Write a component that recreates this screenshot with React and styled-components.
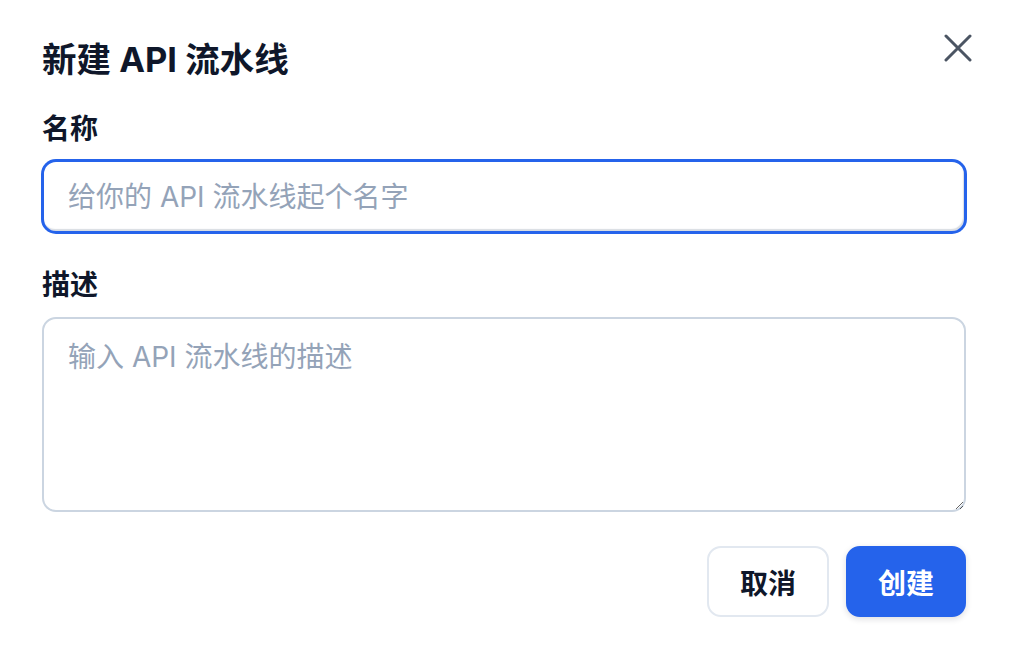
import React from 'react'
import styled, { createGlobalStyle } from 'styled-components'

const GlobalStyle = createGlobalStyle`
  * {
    box-sizing: border-box;
  }

  body {
    margin: 0;
    background: #ffffff;
    font-family: "Inter", "Noto Sans CJK SC", sans-serif;
    color: #0f172a;
  }
`

const Dialog = styled.div`
  width: 1012px;
  height: 658px;
  padding: 34px 46px 42px 42px;
  display: flex;
  flex-direction: column;
  background: #ffffff;
`

const Header = styled.div`
  display: flex;
  justify-content: space-between;
  align-items: flex-start;
`

const Title = styled.h2`
  margin: 4px 0 0 0;
  font-size: 34.5px;
  line-height: 44px;
  font-weight: 700;
  color: #0f172a;
`

const CloseButton = styled.button`
  border: 0;
  background: none;
  padding: 0;
  margin-right: -6px;
  width: 28px;
  height: 28px;
  color: #4b5563;
  cursor: pointer;
  display: flex;

  svg {
    display: block;
  }
`

const Field = styled.div`
  display: flex;
  flex-direction: column;
  margin-top: ${p => p.$top}px;
`

const Label = styled.label`
  font-size: 28px;
  line-height: 36px;
  font-weight: 600;
  color: #0f172a;
  margin-bottom: ${p => p.$gap}px;
`

const TextInput = styled.input`
  height: 73px;
  width: 100%;
  padding: 0 24px;
  border: 2px solid #2563eb;
  border-radius: 14px;
  box-shadow: 0 0 0 1px #2563eb, inset -1px -2px 1px rgba(100, 116, 139, 0.25);
  font-family: inherit;
  font-size: 28px;
  color: #0f172a;
  outline: none;

  &::placeholder {
    color: #94a3b8;
  }
`

const TextArea = styled.textarea`
  height: 195px;
  width: 100%;
  padding: 20px 24px;
  border: 2px solid #cbd5e1;
  border-radius: 14px;
  font-family: inherit;
  font-size: 28px;
  line-height: 36px;
  color: #0f172a;
  outline: none;
  resize: vertical;

  &::placeholder {
    color: #94a3b8;
  }
`

const Actions = styled.div`
  display: flex;
  justify-content: flex-end;
  gap: 17px;
  margin-top: 34px;
`

const Button = styled.button`
  height: 71px;
  padding: 0 ${p => (p.$primary ? 30 : 31)}px;
  border-radius: 14px;
  border: 2px solid ${p => (p.$primary ? '#2563eb' : '#e2e8f0')};
  background: ${p => (p.$primary ? '#2563eb' : '#ffffff')};
  color: ${p => (p.$primary ? '#ffffff' : '#0f172a')};
  box-shadow: ${p => (p.$primary ? '0 2px 6px rgba(15, 23, 42, 0.14)' : 'none')};
  font-family: inherit;
  font-size: 28px;
  font-weight: 700;
  cursor: pointer;
`

export default function App() {
  return (
    <>
      <GlobalStyle />
      <Dialog>
        <Header>
          <Title>新建 API 流水线</Title>
          <CloseButton aria-label="关闭">
            <svg width="28" height="28" viewBox="0 0 28 28" fill="none">
              <path d="M2 2L26 26M26 2L2 26" stroke="currentColor" strokeWidth="3" strokeLinecap="round" />
            </svg>
          </CloseButton>
        </Header>

        <Field $top={29}>
          <Label $gap={13}>名称</Label>
          <TextInput placeholder="给你的 API 流水线起个名字" />
        </Field>

        <Field $top={34}>
          <Label $gap={14}>描述</Label>
          <TextArea placeholder="输入 API 流水线的描述" />
        </Field>

        <Actions>
          <Button>取消</Button>
          <Button $primary>创建</Button>
        </Actions>
      </Dialog>
    </>
  )
}
